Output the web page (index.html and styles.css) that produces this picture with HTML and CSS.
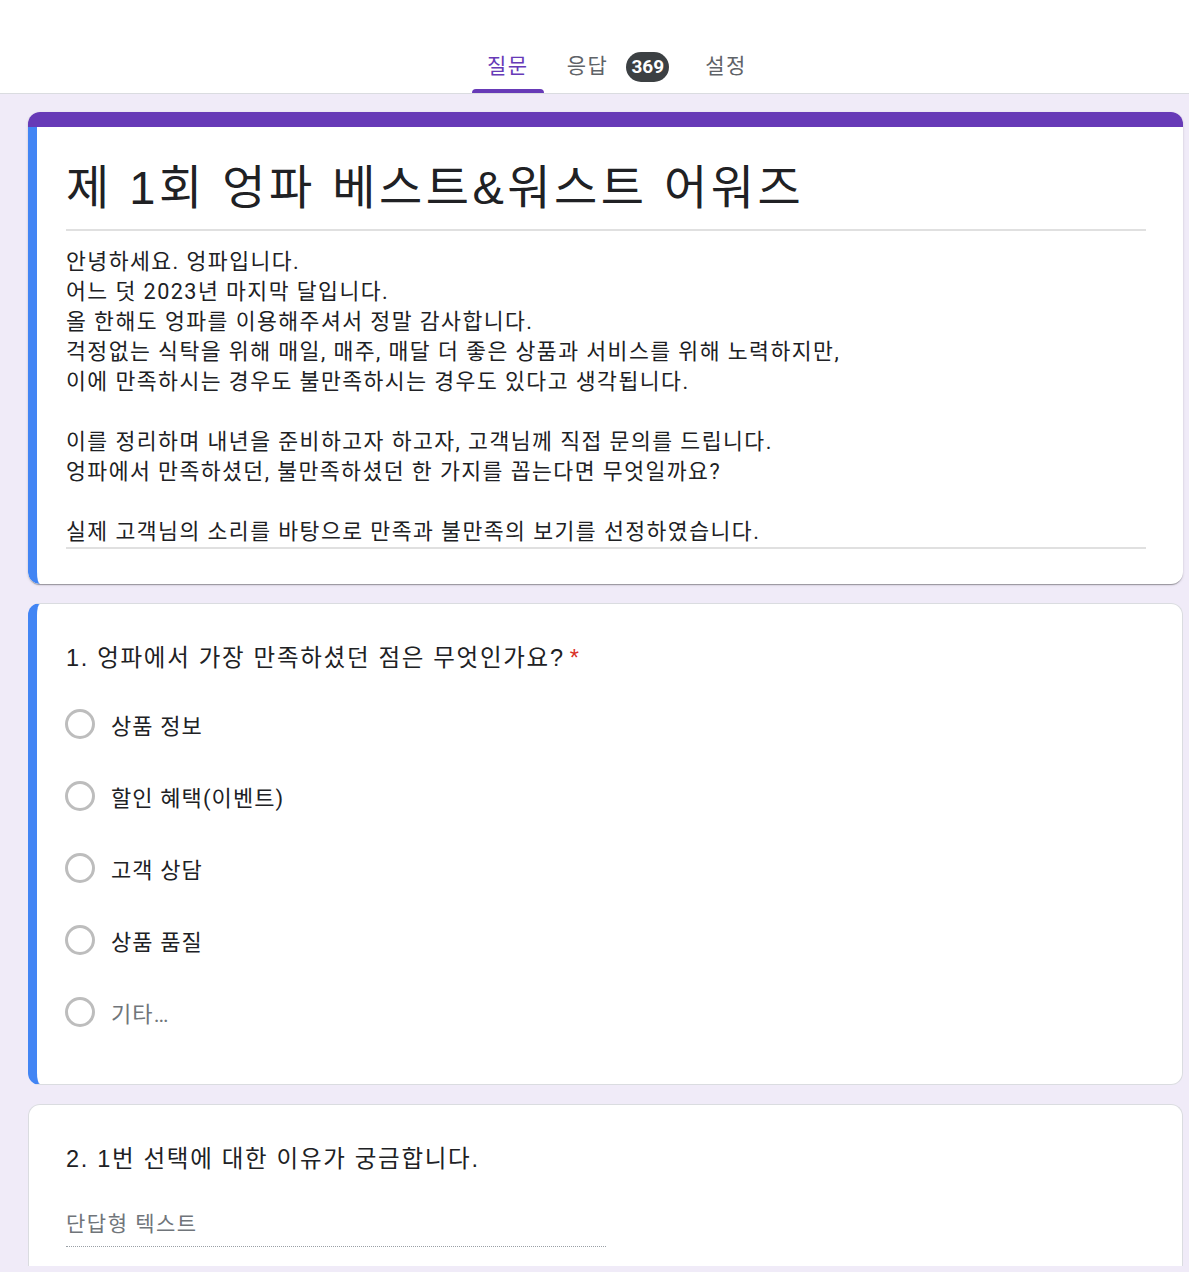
FILE: index.html
```html
<!DOCTYPE html>
<html lang="ko">
<head>
  <meta charset="UTF-8">
  <title>제 1회 엉파 베스트&amp;워스트 어워즈</title>
  <link rel="stylesheet" href="styles.css">
</head>
<body>
  <!-- 상단 탭 -->
  <div class="header">
    <div class="tabs">
      <div class="tab active">질문</div>
      <div class="tab responses">응답<span class="badge">369</span></div>
      <div class="tab">설정</div>
    </div>
  </div>

  <div class="form-wrap">
    <!-- 제목 카드 -->
    <div class="card title-card">
      <div class="title-top"></div>
      <div class="title-body">
        <div class="form-title">제 1회 엉파 베스트&amp;워스트 어워즈</div>
        <div class="form-desc">
          안녕하세요. 엉파입니다.<br>
          어느 덧 2023년 마지막 달입니다.<br>
          올 한해도 엉파를 이용해주셔서 정말 감사합니다.<br>
          걱정없는 식탁을 위해 매일, 매주, 매달 더 좋은 상품과 서비스를 위해 노력하지만,<br>
          이에 만족하시는 경우도 불만족하시는 경우도 있다고 생각됩니다.<br>
          <br>
          이를 정리하며 내년을 준비하고자 하고자, 고객님께 직접 문의를 드립니다.<br>
          엉파에서 만족하셨던, 불만족하셨던 한 가지를 꼽는다면 무엇일까요?<br>
          <br>
          실제 고객님의 소리를 바탕으로 만족과 불만족의 보기를 선정하였습니다.
        </div>
      </div>
    </div>

    <!-- 질문 1 -->
    <div class="card question-card selected">
      <div class="question">1. 엉파에서 가장 만족하셨던 점은 무엇인가요?<span class="required">*</span></div>
      <div class="options">
        <div class="option"><span class="radio"></span><span>상품 정보</span></div>
        <div class="option"><span class="radio"></span><span>할인 혜택(이벤트)</span></div>
        <div class="option"><span class="radio"></span><span>고객 상담</span></div>
        <div class="option"><span class="radio"></span><span>상품 품질</span></div>
        <div class="option other"><span class="radio"></span><span>기타…</span></div>
      </div>
    </div>

    <!-- 질문 2 -->
    <div class="card question-card last">
      <div class="question">2. 1번 선택에 대한 이유가 궁금합니다.</div>
      <div class="short-answer">단답형 텍스트</div>
    </div>
  </div>
</body>
</html>
```

FILE: styles.css
```css
body {
  margin: 0;
  background-color: #f0ebf8;
  font-family: Roboto, "Noto Sans CJK KR", sans-serif;
  color: #202124;
}
.header {
  height: 93px;
  background-color: #fff;
  border-bottom: 1px solid #dadce0;
  padding-left: 472px;
}
.tabs {
  display: flex;
  gap: 8px;
}
.tab {
  position: relative;
  display: flex;
  align-items: center;
  height: 30px;
  padding: 51px 15px 12px;
  font-size: 21px;
  line-height: 30px;
  letter-spacing: 1.5px;
  color: #5f6368;
}
.tab.responses {
  padding-right: 13px;
}
.tab.active {
  color: #673ab7;
}
.tab.active::after {
  content: "";
  position: absolute;
  left: 0;
  right: 0;
  bottom: 0;
  height: 4px;
  border-radius: 4px 4px 0 0;
  background-color: #673ab7;
}
.badge {
  margin-left: 18px;
  width: 43px;
  height: 30px;
  border-radius: 15px;
  background-color: #3c4043;
  color: #fff;
  font-size: 19px;
  font-weight: bold;
  line-height: 30px;
  letter-spacing: 0;
  text-align: center;
  margin-top: 2px;
}
.form-wrap {
  width: 1155px;
  margin-left: 28px;
  padding-top: 18px;
  display: flex;
  flex-direction: column;
  gap: 19px;
}
.card {
  background-color: #fff;
  border-radius: 12px;
}
.title-card {
  overflow: hidden;
  box-shadow: 0 2px 1px -1px rgba(0,0,0,.2), 0 1px 1px 0 rgba(0,0,0,.14), 0 1px 3px 0 rgba(0,0,0,.12);
}
.title-top {
  height: 15px;
  background-color: #673ab7;
}
.title-body {
  border-left: 9px solid #4285f4;
  padding: 29px 37px 35px 29px;
  border-bottom-left-radius: 12px;
}
.form-title {
  font-family: "Liberation Sans", "Noto Sans CJK KR", sans-serif;
  font-size: 47px;
  line-height: 64px;
  letter-spacing: 3.5px;
  padding-bottom: 9px;
  border-bottom: 2px solid #e0e0e0;
}
.form-desc {
  margin-top: 16px;
  font-size: 21.6px;
  line-height: 30px;
  letter-spacing: 1.45px;
  border-bottom: 2px solid #e0e0e0;
}
.question-card {
  border: 1px solid #dadce0;
  padding: 37px 37px 36px 37px;
}
.question-card.selected {
  border-left: 9px solid #4285f4;
  padding-left: 29px;
}
.question {
  font-family: "Liberation Sans", "Noto Sans CJK KR", sans-serif;
  font-size: 23.5px;
  line-height: 34px;
  letter-spacing: 1.7px;
}
.required {
  color: #d93025;
  margin-left: 5px;
  letter-spacing: 0;
}
.options {
  margin-top: 13px;
}
.option {
  display: flex;
  align-items: center;
  height: 72px;
  font-size: 22px;
  letter-spacing: 1.1px;
}
.radio {
  width: 24px;
  height: 24px;
  border: 3px solid #bdbdbd;
  border-radius: 50%;
  margin-left: -1px;
  margin-right: 16px;
}
.option.other {
  color: #70757a;
}
.question-card.last {
  border-bottom: none;
  border-radius: 12px 12px 0 0;
  padding-bottom: 19px;
}
.short-answer {
  width: 540px;
  margin-top: 33px;
  padding-bottom: 7px;
  font-size: 21px;
  line-height: 30px;
  letter-spacing: 1.5px;
  color: #70757a;
  border-bottom: 1px dotted #9aa0a6;
}
```
